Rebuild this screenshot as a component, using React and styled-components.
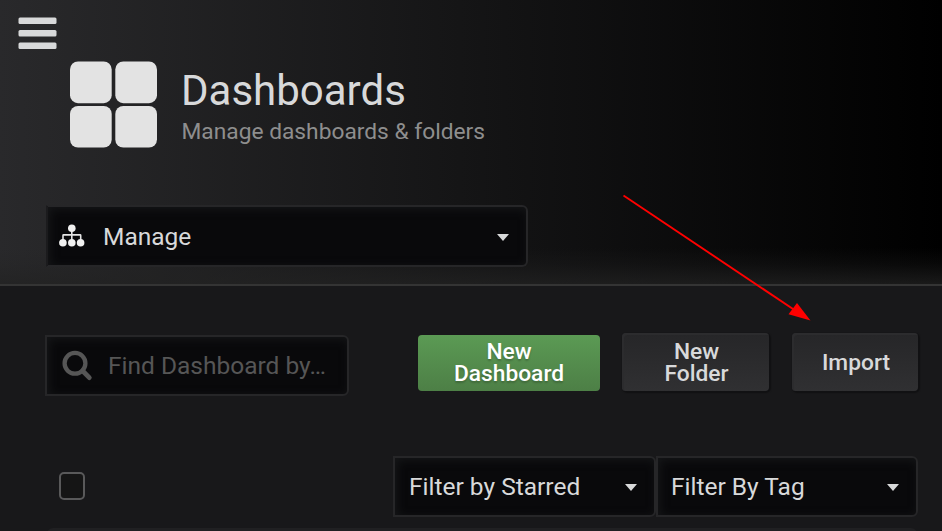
import React from "react";
import styled, { createGlobalStyle } from "styled-components";

const GlobalStyle = createGlobalStyle`
  * { box-sizing: border-box; }
  html, body { margin: 0; background: #161719; }
  body { font-family: Roboto, "Liberation Sans", sans-serif; color: #d8d9da; overflow: hidden; }
`;

const Page = styled.div`
  position: relative;
  width: 942px;
  height: 531px;
  overflow: hidden;
  background: #18181a;
`;

const PageHeader = styled.header`
  height: 286px;
  padding: 17px 0 0 18px;
  background:
    linear-gradient(transparent 248px, rgba(34, 34, 34, 0.25) 264px, rgba(34, 34, 34, 0.75) 284px),
    linear-gradient(90deg, #29292b, #000);
  border-bottom: 2px solid #343434;
`;

const MenuIcon = styled.svg`
  display: block;
  width: 39px;
  height: 33px;
  fill: #d8d9da;
`;

const TitleRow = styled.div`
  display: flex;
  margin: 11px 0 0 52px;
`;

const AppsIcon = styled.svg`
  width: 87px;
  height: 87px;
  fill: #e3e3e3;
`;

const Titles = styled.div`
  margin: 5px 0 0 24px;
`;

const Title = styled.h1`
  margin: 0;
  font-size: 42px;
  font-weight: 400;
  line-height: 50px;
`;

const Subtitle = styled.div`
  margin-left: 0.5px;
  font-size: 22.75px;
  line-height: 32px;
  color: #8e8e8e;
`;

const Field = styled.div`
  display: flex;
  align-items: center;
  width: ${(p) => p.$width}px;
  height: ${(p) => p.$height || 61}px;
  padding: 0 17px 0 ${(p) => p.$pad || 14}px;
  border: 2px solid #262628;
  border-radius: 0 6px 6px 0;
  background: #09090b;
  box-shadow: inset 2px 2px 10px #161719;
  font-size: 24.5px;
  svg { flex: none; }
`;

const HeaderField = styled(Field)`
  margin: 57px 0 0 28px;
  border-left-color: #1b1b1d;
`;

const Label = styled.span`
  flex: 1;
  margin-left: ${(p) => p.$gap || 0}px;
  white-space: nowrap;
`;

const Caret = styled.i`
  border: 6px solid transparent;
  border-top: 7px solid #d8d9da;
  border-bottom: 0;
  margin-top: 2px;
`;

const ActionBar = styled.div`
  display: flex;
  align-items: flex-start;
  height: 65px;
  margin: 47px 0 0 45px;
`;

const Search = styled(Field)`
  margin: 2px 69px 0 0;
  color: #565656;
`;

const Button = styled.button`
  display: flex;
  align-items: center;
  justify-content: center;
  width: ${(p) => p.$width}px;
  height: 58px;
  margin: 0 23px 0 0;
  padding: 2px 0 0 2px;
  border: 0;
  border-radius: 4px;
  background: linear-gradient(#262628, #303032);
  box-shadow: inset 2px 2px 0 #2c2c2e, 1px 1px 1px 1px #111113;
  color: #d8d9da;
  font: 500 22.75px/22px Roboto, "Liberation Sans", sans-serif;
  text-align: center;
`;

const PrimaryButton = styled(Button)`
  height: 56px;
  margin: 2px 22px 0 0;
  padding: 0;
  background: linear-gradient(#5b9a54, #4d7f46);
  box-shadow: none;
  color: #fff;
  text-shadow: 0 2px 2px rgba(0, 0, 0, 0.2);
`;

const FilterBar = styled.div`
  display: flex;
  align-items: center;
  margin: 58px 0 0 59px;
`;

const Checkbox = styled.div`
  width: 26px;
  height: 28px;
  margin: 0 308px 2px 0;
  border: 2px solid #59595a;
  border-radius: 5px;
  background: #151515;
`;

const ResultList = styled.div`
  height: 20px;
  margin: 11px 25px 0 47px;
  border-radius: 6px;
  background: #202022;
`;

const Arrow = styled.svg`
  position: absolute;
  top: 190px;
  left: 618px;
  width: 198px;
  height: 136px;
`;

function SitemapIcon() {
  return (
    <svg width="26" height="24" viewBox="0 0 26 24" fill="#f0f0f0">
      <path d="M4 17V11.4Q4 10.9 4.5 10.9H21.2Q21.7 10.9 21.7 11.4V17M12.8 5V17" fill="none" stroke="#e4e4e4" strokeWidth="1.6" />
      <circle cx="12.8" cy="4.2" r="3.8" />
      <circle cx="3.9" cy="18.8" r="3.8" />
      <circle cx="12.8" cy="18.8" r="3.8" />
      <circle cx="21.6" cy="18.8" r="3.8" />
    </svg>
  );
}

function SearchIcon() {
  return (
    <svg width="31" height="31" viewBox="0 0 31 31" fill="none" stroke="currentColor">
      <circle cx="13" cy="13.3" r="10.4" strokeWidth="4.3" />
      <path d="M20.5 20.8L27.3 27.6" strokeWidth="4.8" strokeLinecap="round" />
    </svg>
  );
}

export default function App() {
  return (
    <Page>
      <GlobalStyle />
      <PageHeader>
        <MenuIcon viewBox="0 0 39 33">
          <rect x="0.5" y="0.5" width="38" height="6.5" rx="1.5" />
          <rect x="0.5" y="13" width="38" height="6.5" rx="1.5" />
          <rect x="0.5" y="25.5" width="38" height="6.5" rx="1.5" />
        </MenuIcon>
        <TitleRow>
          <AppsIcon viewBox="0 0 87 87">
            <rect x="0" y="0.5" width="41.7" height="41.7" rx="8" />
            <rect x="45.3" y="0.5" width="41.7" height="41.7" rx="8" />
            <rect x="0" y="45" width="41.7" height="41.5" rx="8" />
            <rect x="45.3" y="45" width="41.7" height="41.5" rx="8" />
          </AppsIcon>
          <Titles>
            <Title>Dashboards</Title>
            <Subtitle>Manage dashboards &amp; folders</Subtitle>
          </Titles>
        </TitleRow>
        <HeaderField $width={482} $height={62} $pad={11}>
          <SitemapIcon />
          <Label $gap={18}>Manage</Label>
          <Caret />
        </HeaderField>
      </PageHeader>
      <ActionBar>
        <Search $width={304} $pad={15}>
          <SearchIcon />
          <Label $gap={15}>Find Dashboard by…</Label>
        </Search>
        <PrimaryButton $width={182}>New<br />Dashboard</PrimaryButton>
        <Button $width={147}>New<br />Folder</Button>
        <Button $width={126}>Import</Button>
      </ActionBar>
      <FilterBar>
        <Checkbox />
        <Field $width={263}><Label>Filter by Starred</Label><Caret /></Field>
        <Field $width={262} $pad={13}><Label>Filter By Tag</Label><Caret /></Field>
      </FilterBar>
      <ResultList />
      <Arrow viewBox="618 190 198 136">
        <path d="M623.5 195.5L796 311" stroke="#f00" strokeWidth="1.9" fill="none" />
        <path d="M810.5 320.5L788.5 314.3L797 303Z" fill="#f00" />
      </Arrow>
    </Page>
  );
}
